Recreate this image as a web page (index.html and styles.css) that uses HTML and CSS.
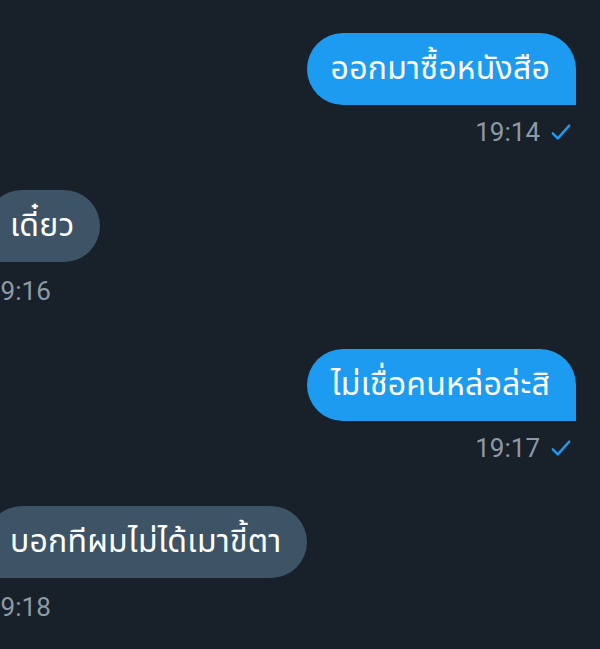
FILE: index.html
```html
<!DOCTYPE html>
<html lang="th">
<head>
<meta charset="utf-8">
<link rel="stylesheet" href="styles.css">
</head>
<body>
<div class="chat">
  <div class="msg sent first">
    <div class="bubble">ออกมาซื้อหนังสือ</div>
    <div class="meta"><span>19:14</span><svg class="check" viewBox="0 0 24 24" width="22" height="22"><path d="M3 13.5l5.5 5.5L21 5" fill="none" stroke="#1d9bf0" stroke-width="2.6" stroke-linecap="round" stroke-linejoin="round"/></svg></div>
  </div>
  <div class="msg recv">
    <div class="bubble">เดี๋ยว</div>
    <div class="meta"><span>19:16</span></div>
  </div>
  <div class="msg sent">
    <div class="bubble">ไม่เชื่อคนหล่อล่ะสิ</div>
    <div class="meta"><span>19:17</span><svg class="check" viewBox="0 0 24 24" width="22" height="22"><path d="M3 13.5l5.5 5.5L21 5" fill="none" stroke="#1d9bf0" stroke-width="2.6" stroke-linecap="round" stroke-linejoin="round"/></svg></div>
  </div>
  <div class="msg recv">
    <div class="bubble">บอกทีผมไม่ได้เมาขี้ตา</div>
    <div class="meta"><span>19:18</span></div>
  </div>
</div>
</body>
</html>
```
FILE: styles.css
```css
html, body {
  margin: 0;
  padding: 0;
  background: #18202a;
  width: 600px;
  height: 649px;
  overflow: hidden;
}
.chat {
  display: flex;
  flex-direction: column;
  padding: 33px 24px 0 0;
  margin-left: -14px;
  font-family: "Noto Sans Thai", "Noto Sans", Roboto, sans-serif;
}
.msg {
  display: flex;
  flex-direction: column;
  margin-bottom: 44px;
}
.msg.sent { align-items: flex-end; }
.msg.recv { align-items: flex-start; }
.bubble {
  height: 72px;
  box-sizing: border-box;
  padding: 0 26px 0 24px;
  display: flex;
  align-items: center;
  font-size: 32px;
  letter-spacing: 0.2px;
  color: #ffffff;
  border-radius: 36px;
  white-space: nowrap;
}
.sent .bubble {
  background: #1d9bf0;
  border-bottom-right-radius: 0;
}
.recv .bubble {
  background: #3d5466;
  border-bottom-left-radius: 0;
}
.meta {
  display: flex;
  align-items: center;
  gap: 10px;
  margin-top: 12px;
  font-family: Roboto, sans-serif;
  font-size: 26px;
  color: #8d9aa6;
  height: 29px;
}
.recv .meta { margin-top: 14px; }
.sent .meta { padding-right: 4px; }
.check { display: block; }
```
